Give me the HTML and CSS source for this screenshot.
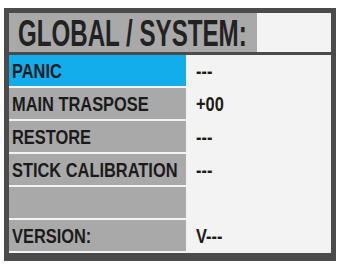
FILE: index.html
```html
<!DOCTYPE html>
<html>
<head>
<meta charset="utf-8">
<link rel="stylesheet" href="styles.css">
</head>
<body>
<div class="panel">
  <div class="head">
    <div class="title"><span class="squeeze title-text">GLOBAL / SYSTEM:</span></div>
    <div class="title-blank"></div>
  </div>
  <div class="rows">
    <div class="row active">
      <div class="label"><span class="squeeze">PANIC</span></div>
      <div class="value"><span class="squeeze">---</span></div>
    </div>
    <div class="row">
      <div class="label"><span class="squeeze">MAIN TRASPOSE</span></div>
      <div class="value"><span class="squeeze">+00</span></div>
    </div>
    <div class="row">
      <div class="label"><span class="squeeze">RESTORE</span></div>
      <div class="value"><span class="squeeze">---</span></div>
    </div>
    <div class="row">
      <div class="label"><span class="squeeze">STICK CALIBRATION</span></div>
      <div class="value"><span class="squeeze">---</span></div>
    </div>
    <div class="row">
      <div class="label"></div>
      <div class="value"></div>
    </div>
    <div class="row">
      <div class="label"><span class="squeeze">VERSION:</span></div>
      <div class="value"><span class="squeeze">V---</span></div>
    </div>
  </div>
</div>
</body>
</html>
```
FILE: styles.css
```css
html, body {
  margin: 0;
  padding: 0;
  background: #ffffff;
}
body {
  font-family: "Liberation Sans", Arial, sans-serif;
  font-weight: bold;
  color: #1b1b1b;
}
.panel {
  margin: 8px 0 0 4px;
  width: 322px;
  border: 5px solid #4b4b4b;
  border-bottom-width: 8px;
  background: #f3f3f3;
}
.head {
  display: grid;
  grid-template-columns: 248px 1fr;
  height: 37px;
  border-bottom: 5px solid #4b4b4b;
}
.title {
  background: #a9a9a9;
  display: flex;
  align-items: center;
  padding-left: 9px;
  min-width: 0;
}
.title-blank {
  background: #f3f3f3;
}
.rows {
  display: flex;
  flex-direction: column;
  gap: 2px;
  padding-bottom: 2px;
}
.row {
  display: grid;
  grid-template-columns: 177px 1fr;
  height: 31px;
}
.label {
  background: #a9a9a9;
  display: flex;
  align-items: center;
  padding-left: 3px;
  min-width: 0;
}
.row.active .label {
  background: #12adea;
}
.value {
  display: flex;
  align-items: center;
  padding-left: 10px;
}
.squeeze {
  display: inline-block;
  flex: none;
  white-space: nowrap;
  font-size: 20px;
  line-height: 1;
  transform: scaleX(0.82);
  transform-origin: left center;
}
.title .title-text {
  font-size: 36px;
  transform: scaleX(0.67);
  margin-top: 3px;
  color: #222222;
}
```
